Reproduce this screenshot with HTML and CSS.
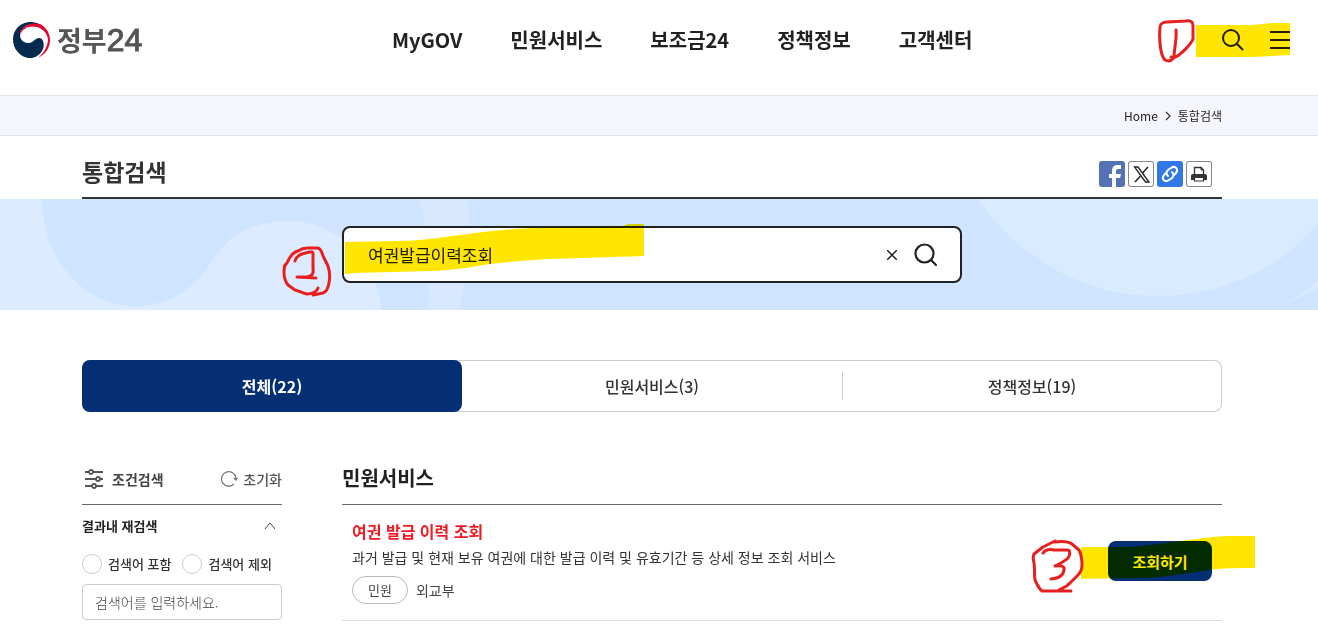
FILE: index.html
```html
<!DOCTYPE html>
<html lang="ko">
<head>
    <meta charset="UTF-8">
    <meta name="viewport" content="width=device-width, initial-scale=1.0">
    <title>통합검색 | 정부24</title>
    <link rel="stylesheet" href="styles.css">
</head>
<body>
    <!-- 헤더 -->
    <header class="header">
        <a href="#" class="logo">
            <svg class="logo-mark" viewBox="0 0 38 38" aria-hidden="true">
                <path d="M31 5C21 -2 11 1 6 6C-1 13 0 24 5 30C10 37 19 39 25 35C31 31 33 25 31 20C30 17 27 16 24 18C21 20 20 22 16 22C11 22 8 18 8 14C8 10 11 6 16 4C21 2 27 3 31 5Z" fill="#06294f"/>
                <path d="M8 15C8 10 11 6 16 4C21 2 27 2 31 5C36 9 38 14 38 19C38 26 34 33 26 37C33 31 36 24 36 18C35 12 31 8 25 6C17 4 10 7 8 15Z" fill="#e8002d"/>
            </svg>
            <span class="logo-text">정부<span class="logo-num">24</span></span>
        </a>
        <nav class="gnb">
            <a href="#">MyGOV</a>
            <a href="#">민원서비스</a>
            <a href="#">보조금24</a>
            <a href="#">정책정보</a>
            <a href="#">고객센터</a>
        </nav>
        <div class="tools">
            <button type="button" class="icon-btn" aria-label="검색">
                <svg width="22" height="22" viewBox="0 0 22 22" fill="none" stroke="#222" stroke-width="2"><circle cx="9" cy="9" r="8"/><path d="M15 15L21 21"/></svg>
            </button>
            <button type="button" class="icon-btn" aria-label="전체메뉴">
                <svg width="20" height="20" viewBox="0 0 20 20" stroke="#222" stroke-width="2"><path d="M0 2H20M0 10H20M0 18H20"/></svg>
            </button>
            <svg class="mark mark-1 marker" width="136" height="48" viewBox="0 0 136 48" aria-hidden="true">
                <path d="M42 9H98L118 7H136V39L118 40L98 41H42Z"/>
            </svg>
            <svg class="mark mark-1 pen" width="136" height="48" viewBox="0 0 136 48" aria-hidden="true">
                <path d="M19 42C17 46 11 46 9 41C6 35 5 20 6 11C6 8 9 6 13 6L32 5C38 4 39 7 39 10V23C37 28 29 36 26 38C23 41 20 42 17 41M22 14C23 24 20 32 20 42"/>
            </svg>
        </div>
    </header>

    <!-- 현재 위치 -->
    <div class="location">
        <a href="#">Home</a>
        <svg width="6" height="10" viewBox="0 0 6 10" fill="none" stroke="#333" stroke-width="1.200" aria-hidden="true"><path d="M1 1L5 5L1 9"/></svg>
        <span>통합검색</span>
    </div>

    <div class="page-title">
        <h1>통합검색</h1>
        <div class="share">
            <button type="button" class="share-btn facebook" aria-label="페이스북">
                <svg viewBox="0 0 26 26"><path d="M13 26V17H10V13H13V10C13 6 15 4 19 4H22V8H19C18 8 17 9 17 10V13H22L21 17H17V26Z" fill="#fff"/></svg>
            </button>
            <button type="button" class="share-btn" aria-label="X">
                <svg viewBox="0 0 26 26" fill="none" stroke="#222"><path d="M6.500 6H10L21 21H17.500Z" stroke-width="1.300"/><path d="M20 6L14.500 12M12.500 15L7 21" stroke-width="1.500"/></svg>
            </button>
            <button type="button" class="share-btn link" aria-label="링크 복사">
                <svg viewBox="0 0 26 26" fill="none" stroke="#fff" stroke-width="2" stroke-linecap="round"><path d="M11 15C9 13 9 11 11 9L14 7C18 4 22 8 19 12L17 14"/><path d="M15 11C17 13 17 15 15 17L12 19C8 22 4 18 7 14L9 12"/></svg>
            </button>
            <button type="button" class="share-btn" aria-label="인쇄">
                <svg viewBox="0 0 26 26"><path d="M8.500 13V6.500H15L17.500 9V13" fill="none" stroke="#333" stroke-width="1.300"/><path d="M15 6V9H18" fill="none" stroke="#333"/><path d="M5 15Q5 13 7 13H19Q21 13 21 15V19H5Z" fill="#333"/><path d="M8.500 16.500H17.500V20H8.500Z" fill="#fff" stroke="#333" stroke-width="1.200"/></svg>
            </button>
        </div>
    </div>

    <!-- 검색 영역 -->
    <div class="search-area">
        <svg class="wave" viewBox="0 0 1318 111" preserveAspectRatio="xMidYMid slice" aria-hidden="true">
            <path d="M0 0H42C42 60 84 107 134 107C172 107 196 88 212 62C232 32 258 22 288 22C340 22 378 66 381 111H0Z" fill="#dcebff"/>
            <path d="M418 0Q435 55 427 111H459Q473 55 468 0Z" fill="#d8e9ff"/>
            <path d="M978 0C1020 62 1088 97 1156 97C1220 97 1278 72 1318 25V0Z" fill="#d9ebff"/>
            <path d="M1283 104Q1304 95 1318 82V88Q1304 98 1283 104Z" fill="#d9ebff"/>
        </svg>
        <form class="search-form">
            <input type="text" class="search-input" aria-label="검색어" value="여권발급이력조회">
            <button type="reset" class="icon-btn" aria-label="지우기">
                <svg width="10" height="10" viewBox="0 0 10 10" stroke="#222" stroke-width="1.500"><path d="M0 0L10 10M10 0L0 10"/></svg>
            </button>
            <button type="submit" class="icon-btn" aria-label="검색">
                <svg width="24" height="24" viewBox="0 0 24 24" fill="none" stroke="#222" stroke-width="2.200" stroke-linecap="round"><circle cx="10.500" cy="10.500" r="9"/><path d="M17 17L22 22"/></svg>
            </button>
            <svg class="mark mark-2 marker" width="366" height="80" viewBox="0 0 366 80" aria-hidden="true">
                <path d="M65 23L117 22C150 22 190 13 233 10C270 8 310 8 343 7L348 5H364V37C330 38 300 39 267 40C240 42 215 44 203 46C180 50 160 52 150 52L75 54L65 55Z"/>
            </svg>
            <svg class="mark mark-2 pen" width="366" height="80" viewBox="0 0 366 80" aria-hidden="true">
                <path d="M38 69C37 73 31 75 27 75C22 74 19 72 15 71L8 66C5 62 4 59 4 54C4 49 4 46 7 44C10 37 14 33 18 32C21 30 24 29 27 29H38C42 30 42 36 44 39L48 47C50 53 50 59 49 64C48 70 46 73 43 74Q38 75 33 76M15 42C16 38 19 36 22 35C28 33 33 32 33 34V50C34 56 31 57 27 58H17L36 59"/>
            </svg>
        </form>
    </div>

    <main class="content">
        <nav class="tabs">
            <a href="#" class="tab active">전체(22)</a>
            <a href="#" class="tab">민원서비스(3)</a>
            <a href="#" class="tab">정책정보(19)</a>
        </nav>

        <div class="columns">
            <!-- 조건검색 -->
            <aside class="filter">
                <div class="filter-head">
                    <h2>
                        <svg width="20" height="20" viewBox="0 0 20 20" fill="#fff" stroke="#555" stroke-width="1.800" aria-hidden="true"><path d="M1 3H19M1 10H19M1 17H19"/><circle cx="7" cy="3" r="2"/><circle cx="14" cy="10" r="2"/><circle cx="10" cy="17" r="2"/></svg>
                        조건검색
                    </h2>
                    <button type="button" class="reset-btn">
                        <svg width="18" height="18" viewBox="0 0 18 18" aria-hidden="true"><path d="M14 14A7.300 7.300 0 1 1 16 8" fill="none" stroke="#777" stroke-width="1.300"/><path d="M13 8H18L16 11Z" fill="#777"/></svg>
                        초기화
                    </button>
                </div>
                <button type="button" class="filter-toggle">
                    결과내 재검색
                    <svg width="12" height="8" viewBox="0 0 12 8" fill="none" stroke="#444" aria-hidden="true"><path d="M1 7L6 1L11 7"/></svg>
                </button>
                <div class="radios">
                    <label><input type="radio" name="range">검색어 포함</label>
                    <label><input type="radio" name="range">검색어 제외</label>
                </div>
                <input type="text" class="filter-input" aria-label="결과내 검색어" placeholder="검색어를 입력하세요.">
            </aside>

            <!-- 검색 결과 -->
            <section class="results">
                <h2>민원서비스</h2>
                <article class="result">
                    <div class="result-text">
                        <h3><a href="#">여권 발급 이력 조회</a></h3>
                        <p>과거 발급 및 현재 보유 여권에 대한 발급 이력 및 유효기간 등 상세 정보 조회 서비스</p>
                        <div class="result-meta">
                            <span class="badge">민원</span>
                            <span>외교부</span>
                        </div>
                    </div>
                    <div class="result-action">
                        <button type="button" class="btn-blue">조회하기</button>
                        <svg class="mark mark-3 marker" width="226" height="62" viewBox="0 0 226 62" aria-hidden="true">
                            <path d="M51 13H90C105 13 112 12 120 11L167 5C180 3 190 2 202 2H225V34C210 34 198 34 187 35L167 38L130 43C120 44 115 44 107 44L51 45Z"/>
                        </svg>
                        <svg class="mark mark-3 pen" width="226" height="62" viewBox="0 0 226 62" aria-hidden="true">
                            <path d="M25 8C34 7 39 8 42 10L49 16C51 20 52 25 52 31C52 35 51 38 48 41L40 49C36 54 31 54 28 57H41H12C8 54 7 50 5 46C4 40 5 34 4 29C3 25 3 22 4 20L13 13L25 7M13 19C16 15 20 15 24 16H37C41 16 40 21 38 24C34 28 29 30 25 32C31 31 35 32 34 36C33 42 29 44 21 45"/>
                        </svg>
                    </div>
                </article>
            </section>
        </div>
    </main>
</body>
</html>
```
FILE: styles.css
```css
* {
    box-sizing: border-box;
}
body {
    margin: 0;
    font-family: "Noto Sans CJK KR", sans-serif;
    font-size: 14px;
    line-height: 20px;
    color: #222;
    background: #fff;
}
a {
    color: inherit;
    text-decoration: none;
}
h1, h2, h3, p {
    margin: 0;
}
button, input {
    font-family: inherit;
    color: inherit;
}
button {
    padding: 0;
    border: 0;
    background: none;
    cursor: pointer;
}
svg {
    display: block;
}

/* 헤더 */
.header {
    display: flex;
    justify-content: space-between;
    align-items: center;
    padding: 20px 28px 35px 12px;
}
.logo {
    display: flex;
    align-items: center;
    gap: 7px;
    height: 40px;
}
.logo-mark {
    width: 38px;
    height: 38px;
}
.logo-text {
    font-size: 27px;
    font-weight: 700;
    line-height: 40px;
    color: #555;
}
.logo-num {
    font-family: "Liberation Sans", sans-serif;
    font-size: 32px;
    font-weight: 400;
    line-height: 32px;
    -webkit-text-stroke: 1px #555;
}
.gnb {
    display: flex;
    gap: 48px;
    font-size: 20px;
    font-weight: 700;
    line-height: 40px;
}
.tools {
    position: relative;
    display: flex;
    align-items: center;
    gap: 26px;
}

/* 현재 위치 */
.location {
    display: flex;
    justify-content: flex-end;
    align-items: center;
    gap: 7px;
    padding: 10px 96px 9px 82px;
    border-top: 1px solid #e4e5ea;
    border-bottom: 1px solid #e4e5ea;
    background: #f5f6fb;
    font-size: 12px;
}

/* 제목 */
.page-title {
    display: flex;
    justify-content: space-between;
    align-items: center;
    margin: 0 96px 0 82px;
    padding: 17px 0 8px;
    border-bottom: 2px solid #333;
}
.page-title h1 {
    font-size: 23px;
    font-weight: 700;
    line-height: 36px;
    color: #333;
}
.share {
    display: flex;
    gap: 3px;
    padding: 6px 10px 0 0;
}
.share-btn {
    width: 26px;
    height: 26px;
    border-radius: 3px;
    box-shadow: inset 0 0 0 1px #888;
}
.facebook {
    background: #5472b5;
    box-shadow: none;
}
.link {
    background: #3178e6;
    box-shadow: none;
}

/* 검색 영역 */
.search-area {
    position: relative;
    padding: 27px 96px 27px 82px;
    background: #cfe5ff;
}
.wave {
    position: absolute;
    inset: 0;
    width: 100%;
    height: 100%;
}
.search-form {
    position: relative;
    display: flex;
    align-items: center;
    gap: 17px;
    max-width: 620px;
    margin: 0 auto;
    padding: 0 22px 0 24px;
    border: 2px solid #222;
    border-radius: 8px;
    background: #fff;
}
.search-input {
    flex: 1;
    min-width: 0;
    height: 53px;
    padding: 0;
    border: 0;
    outline: 0;
    background: none;
    font-size: 17px;
}

/* 탭 */
.content {
    padding: 50px 96px 0 82px;
}
.tabs {
    display: flex;
    height: 52px;
    border-radius: 8px;
    box-shadow: inset 0 0 0 1px #ccc;
}
.tab {
    display: flex;
    flex: 1;
    align-items: center;
    justify-content: center;
    font-size: 16px;
    font-weight: 500;
    color: #333;
}
.tab.active {
    border-radius: 8px;
    background: #042f75;
    font-weight: 700;
    color: #fff;
}
.tab:last-child {
    background: linear-gradient(#ccc, #ccc) left center / 1px 28px no-repeat;
}

/* 본문 */
.columns {
    display: flex;
    gap: 60px;
    margin-top: 50px;
}
.filter {
    width: 200px;
}
.filter-head {
    display: flex;
    justify-content: space-between;
    align-items: center;
    height: 43px;
    padding: 0 0 8px 2px;
    border-bottom: 1px solid #666;
}
.filter-head h2 {
    display: flex;
    align-items: center;
    gap: 8px;
    font-size: 14px;
    font-weight: 700;
    color: #444;
}
.reset-btn {
    display: flex;
    align-items: center;
    gap: 5px;
    font-size: 14px;
    font-weight: 500;
    color: #555;
}
.filter-toggle {
    display: flex;
    justify-content: space-between;
    align-items: center;
    width: 100%;
    padding: 11px 6px 11px 0;
    font-size: 13px;
    font-weight: 700;
    line-height: 20px;
}
.radios {
    display: flex;
    gap: 11px;
    margin-top: 7px;
    font-size: 13px;
    font-weight: 500;
    color: #333;
}
.radios label {
    display: flex;
    align-items: center;
    gap: 6px;
}
.radios input {
    width: 20px;
    height: 20px;
    margin: 0;
    border: 1px solid #ccc;
    border-radius: 50%;
    appearance: none;
}
.radios input:checked {
    border: 6px solid #042f75;
}
.filter-input {
    width: 100%;
    height: 36px;
    margin-top: 10px;
    padding: 0 12px;
    border: 1px solid #ccc;
    border-radius: 4px;
    font-size: 14px;
}
.filter-input::placeholder {
    font-weight: 300;
    color: #444;
}

/* 검색 결과 */
.results {
    flex: 1;
}
.results h2 {
    height: 43px;
    border-bottom: 1px solid #666;
    font-size: 20px;
    font-weight: 700;
    line-height: 32px;
}
.result {
    display: flex;
    justify-content: space-between;
    align-items: center;
    padding: 13px 10px 16px;
    border-bottom: 1px solid #ddd;
}
.result h3 {
    font-size: 16px;
    font-weight: 700;
    line-height: 26px;
    color: #ed1c24;
}
.result p {
    line-height: 26px;
    color: #333;
}
.result-meta {
    display: flex;
    align-items: center;
    gap: 8px;
    margin-top: 6px;
    color: #444;
}
.badge {
    padding: 3px 15px;
    border: 1px solid #bbb;
    border-radius: 14px;
    font-size: 13px;
}
.result-action {
    position: relative;
}
.btn-blue {
    width: 104px;
    height: 40px;
    border-radius: 8px;
    background: #042f75;
    font-size: 15px;
    font-weight: 700;
    color: #fff;
}

/* 순서 표시 */
.mark {
    position: absolute;
    pointer-events: none;
}
.mark-1 {
    top: -13px;
    right: 0;
}
.mark-2 {
    top: -9px;
    left: -64px;
}
.mark-3 {
    top: -7px;
    left: -78px;
}
.marker {
    fill: #ffe600;
    mix-blend-mode: multiply;
}
.pen {
    fill: none;
    stroke: #e71f1f;
    stroke-width: 3;
    stroke-linecap: round;
    stroke-linejoin: round;
}
```
